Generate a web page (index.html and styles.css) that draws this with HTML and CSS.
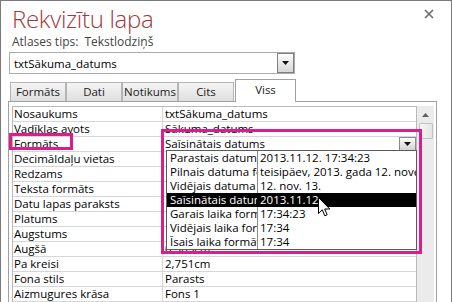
FILE: index.html
```html
<!DOCTYPE html>
<html lang="lv">
<head>
  <meta charset="UTF-8" />
  <title>Rekvizītu lapa</title>
  <link rel="stylesheet" href="styles.css">
</head>
<body>

<div class="window">
  <div class="head">
    <h1 class="title">Rekvizītu lapa</h1>
    <svg class="close" width="10" height="10" viewBox="0 0 10 10">
      <path d="M1 1 L9 9 M9 1 L1 9" stroke="#6a6a6a" stroke-width="1.6" />
    </svg>
  </div>
  <div class="sel-type">Atlases tips:<span class="sel-value">Tekstlodziņš</span></div>

  <div class="combo">
    <span class="combo-text">txtSākuma_datums</span>
    <span class="combo-btn"><svg width="7" height="4" viewBox="0 0 7 4"><path d="M0 0 H7 L3.5 4 Z" fill="#111" /></svg></span>
  </div>

  <div class="tabs">
    <div class="tab">Formāts</div>
    <div class="tab">Dati</div>
    <div class="tab">Notikums</div>
    <div class="tab">Cits</div>
    <div class="tab active">Viss</div>
  </div>

  <div class="panel">
    <div class="grid">
      <div class="row"><div class="name">Nosaukums</div><div class="value">txtSākuma_datums</div></div>
      <div class="row"><div class="name">Vadīklas avots</div><div class="value">Sākuma_datums</div></div>
      <div class="row"><div class="name">Formāts</div><div class="value value-combo">Saīsinātais datums<span class="mini-btn"><svg width="7" height="4" viewBox="0 0 7 4"><path d="M0 0 H7 L3.5 4 Z" fill="#111" /></svg></span></div></div>
      <div class="row"><div class="name">Decimāldaļu vietas</div><div class="value"></div></div>
      <div class="row"><div class="name">Redzams</div><div class="value"></div></div>
      <div class="row"><div class="name">Teksta formāts</div><div class="value"></div></div>
      <div class="row"><div class="name">Datu lapas paraksts</div><div class="value"></div></div>
      <div class="row"><div class="name">Platums</div><div class="value"></div></div>
      <div class="row"><div class="name">Augstums</div><div class="value"></div></div>
      <div class="row"><div class="name">Augšā</div><div class="value">0,503cm</div></div>
      <div class="row"><div class="name">Pa kreisi</div><div class="value">2,751cm</div></div>
      <div class="row"><div class="name">Fona stils</div><div class="value">Parasts</div></div>
      <div class="row"><div class="name">Aizmugures krāsa</div><div class="value">Fons 1</div></div>
    </div>
    <div class="scroll">
      <div class="scroll-up"><svg width="7" height="4" viewBox="0 0 7 4"><path d="M0 4 H7 L3.5 0 Z" fill="#606060" /></svg></div>
      <div class="scroll-thumb"></div>
    </div>
  </div>

  <div class="list">
    <div class="item"><span class="item-name">Parastais datums</span><span class="item-sample">2013.11.12. 17:34:23</span></div>
    <div class="item"><span class="item-name">Pilnais datuma formāts</span><span class="item-sample">teisipäev, 2013. gada 12. novembris</span></div>
    <div class="item"><span class="item-name">Vidējais datuma formāts</span><span class="item-sample">12. nov. 13.</span></div>
    <div class="item selected"><span class="item-name">Saīsinātais datums</span><span class="item-sample">2013.11.12.</span></div>
    <div class="item"><span class="item-name">Garais laika formāts</span><span class="item-sample">17:34:23</span></div>
    <div class="item"><span class="item-name">Vidējais laika formāts</span><span class="item-sample">17:34</span></div>
    <div class="item"><span class="item-name">Īsais laika formāts</span><span class="item-sample">17:34</span></div>
  </div>

  <div class="callout callout-label"></div>
  <div class="callout callout-list"></div>

  <svg class="pointer" width="13" height="21" viewBox="0 0 13 21">
    <path d="M0.5 0.5 L0.5 16.5 L4.3 12.8 L6.8 18.8 L9.2 17.8 L6.7 12 L11.8 12 Z" fill="#fff" stroke="#000" stroke-width="1" stroke-linejoin="round" />
  </svg>
</div>

</body>
</html>
```

FILE: styles.css
```css
body {
  margin: 0;
  background: #fff;
  color: #000;
  font-family: "Open Sans", "Noto Sans", sans-serif;
  font-size: 11.5px;
}
.window {
  position: relative;
  box-sizing: border-box;
  width: 452px;
  height: 302px;
  border: 1px solid #7a7a7a;
  border-bottom: none;
  overflow: hidden;
  background: #fff;
}
.head {
  display: flex;
  justify-content: space-between;
  align-items: flex-start;
  height: 33px;
  padding-left: 11px;
}
.title {
  margin: 0;
  font-weight: 300;
  font-size: 24px;
  letter-spacing: -0.3px;
  line-height: 36px;
  color: #a4373a;
}
.close {
  margin: 8px 17px 0 0;
}
.sel-type {
  height: 16px;
  padding-left: 11px;
  line-height: 16px;
  color: #444;
  font-size: 12px;
}
.sel-value {
  margin-left: 6px;
}
.combo {
  display: flex;
  align-items: center;
  box-sizing: border-box;
  width: 286px;
  height: 22px;
  margin: 2px 0 0 8px;
  border: 1px solid #ababab;
}
.combo-text {
  flex: 1;
  padding-left: 4px;
}
.combo-btn {
  display: flex;
  align-items: center;
  justify-content: center;
  box-sizing: border-box;
  width: 17px;
  height: 20px;
  border: 1px solid #7f7f7f;
  background: linear-gradient(#fdfdfd, #d6d6d6);
}
.tabs {
  display: flex;
  align-items: flex-end;
  height: 22px;
  margin: 5px 0 0 9px;
}
.tab {
  box-sizing: border-box;
  width: 56px;
  height: 19px;
  border: 1px solid #b4b4b4;
  border-bottom: none;
  background: linear-gradient(#f4f4f4, #dfdfdf);
  text-align: center;
  line-height: 17px;
  color: #222;
}
.tab.active {
  position: relative;
  z-index: 1;
  width: 61px;
  height: 23px;
  margin: 0 0 -1px 1px;
  border-color: #a0a0a0;
  background: #fff;
  line-height: 20px;
}
.panel {
  display: flex;
  box-sizing: border-box;
  width: 429px;
  height: 201px;
  margin-left: 7px;
  padding: 4px 2px 0 3px;
  border: 1px solid #a0a0a0;
  border-bottom: none;
}
.grid {
  box-sizing: border-box;
  width: 405px;
  border: 1px solid #b9b9b9;
  border-bottom: none;
}
.row {
  display: flex;
  box-sizing: border-box;
  height: 15px;
  border-bottom: 1px solid #d6d6d6;
  line-height: 14px;
  white-space: nowrap;
}
.name {
  box-sizing: border-box;
  width: 150px;
  padding-left: 1px;
  border-right: 1px solid #d6d6d6;
}
.value {
  flex: 1;
  padding-left: 2px;
  overflow: hidden;
}
.value-combo {
  display: flex;
  justify-content: space-between;
}
.mini-btn {
  display: flex;
  align-items: center;
  justify-content: center;
  box-sizing: border-box;
  width: 17px;
  height: 14px;
  border: 1px solid #8a8a8a;
  background: linear-gradient(#fdfdfd, #d2d2d2);
}
.scroll {
  width: 17px;
  background: #ebebeb;
}
.scroll-up {
  display: flex;
  align-items: center;
  justify-content: center;
  height: 17px;
}
.scroll-thumb {
  box-sizing: border-box;
  width: 14px;
  height: 16px;
  margin-left: 2px;
  border: 1px solid #c2c2c2;
  border-radius: 1px;
  background: linear-gradient(90deg, #f8f8f8, #e4e4e4);
}
.list {
  position: absolute;
  left: 165px;
  top: 149px;
  box-sizing: border-box;
  width: 251px;
  height: 100px;
  border: 1px solid #5a5a5a;
  background: #fff;
}
.item {
  display: flex;
  height: 14px;
  line-height: 14px;
  white-space: nowrap;
}
.item-name {
  box-sizing: border-box;
  width: 91px;
  padding-left: 3px;
  border-right: 1px solid #8c8c8c;
  overflow: hidden;
}
.item-sample {
  flex: 1;
  padding-left: 2px;
  overflow: hidden;
}
.item.selected {
  background: #000;
  color: #fff;
}
.item.selected .item-name {
  border-right-color: #000;
}
.callout {
  position: absolute;
  box-sizing: border-box;
  border: 3px solid #dc1d8c;
}
.callout-label {
  left: 8px;
  top: 132px;
  width: 64px;
  height: 17px;
}
.callout-list {
  left: 160px;
  top: 128px;
  width: 261px;
  height: 125px;
}
.pointer {
  position: absolute;
  left: 317px;
  top: 196px;
}
```
